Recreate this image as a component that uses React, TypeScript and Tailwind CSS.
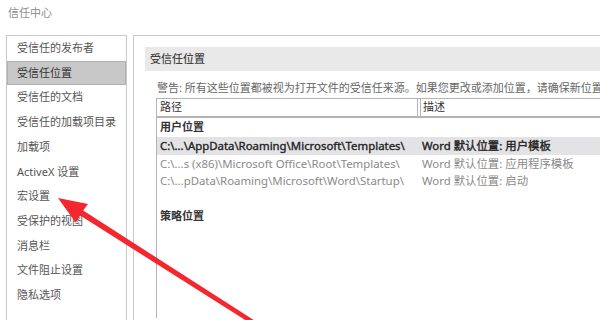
import React from "react";

const font = { fontFamily: '"Noto Sans", "Noto Sans CJK SC", sans-serif' };

const menu = [
  "受信任的发布者",
  "受信任位置",
  "受信任的文档",
  "受信任的加载项目录",
  "加载项",
  "ActiveX 设置",
  "宏设置",
  "受保护的视图",
  "消息栏",
  "文件阻止设置",
  "隐私选项",
];

const rows = [
  { path: "C:\\...\\AppData\\Roaming\\Microsoft\\Templates\\", desc: "Word 默认位置: 用户模板", sel: true },
  { path: "C:\\...s (x86)\\Microsoft Office\\Root\\Templates\\", desc: "Word 默认位置: 应用程序模板", sel: false },
  { path: "C:\\...pData\\Roaming\\Microsoft\\Word\\Startup\\", desc: "Word 默认位置: 启动", sel: false },
];

export default function App() {
  return (
    <div
      className="relative w-[600px] h-[320px] overflow-hidden bg-white text-[11px]"
      style={font}
    >
      <div className="h-[35px] pl-[8px] pt-[5px] text-[11px] leading-[16px] text-[#8c8c8c]">
        信任中心
      </div>
      <div className="flex h-[285px]">
        <div className="ml-[6px] w-[121px] shrink-0 border border-b-0 border-[#c9c9c9]">
          {menu.map((m, i) => (
            <div
              key={m}
              className={
                i === 1
                  ? "h-[24.7px] flex items-center pl-[9px] bg-[#c8c8c8] border border-[#b0b0b0] text-[#333]"
                  : "h-[24.7px] flex items-center pl-[10px] text-[#555]"
              }
            >
              {m}
            </div>
          ))}
        </div>
        <div className="ml-[6px] flex-1 border-l border-t border-[#c9c9c9] pl-[11px] pt-[11px] overflow-hidden">
          <div className="h-[24px] bg-[#e9e9e9] pl-[5px] flex items-center text-[#444] font-medium whitespace-nowrap">
            受信任位置
          </div>
          <div className="mt-[9px] pl-[12px] h-[17px] leading-[16px] whitespace-nowrap text-[#666]">
            警告: 所有这些位置都被视为打开文件的受信任来源。如果您更改或添加位置，请确保新位置
          </div>
          <div className="ml-[11px] mt-[1px] w-[600px]">
            <div className="flex h-[20px] border-t border-b-2 border-[#b4b4b4] text-[#333]">
              <div className="w-[262px] border-l border-r border-[#b4b4b4] pl-[3px] flex items-center">
                路径
              </div>
              <div className="ml-[2px] flex-1 border-l border-[#b4b4b4] pl-[2px] flex items-center">
                描述
              </div>
            </div>
            <div className="border-l border-[#b4b4b4] h-[200px]">
              <div className="h-[19px] pl-[3px] flex items-center font-semibold text-[#333]">
                用户位置
              </div>
              {rows.map((r) => (
                <div
                  key={r.path}
                  className={
                    r.sel
                      ? "h-[17.5px] flex items-center bg-[#e3e3e6] text-[#222] whitespace-nowrap [-webkit-text-stroke:0.35px_#222]"
                      : "h-[17.5px] flex items-center text-[#8a8a8a] whitespace-nowrap"
                  }
                >
                  <div className="w-[264px] pl-[3px] shrink-0 text-[11.4px]">{r.path}</div>
                  <div className="pl-[1px] text-[11.4px]">{r.desc}</div>
                </div>
              ))}
              <div className="h-[17px]" />
              <div className="h-[19px] pl-[3px] flex items-center font-semibold text-[#333]">
                策略位置
              </div>
            </div>
          </div>
        </div>
      </div>
      <svg
        className="absolute left-0 top-0"
        width="600"
        height="320"
        viewBox="0 0 600 320"
      >
        <polygon
          points="58,198 88,204 83.2,210.6 266.8,328.4 263.6,331.6 80.2,215.6 75.6,222.4"
          fill="#f4272f"
        />
      </svg>
    </div>
  );
}
